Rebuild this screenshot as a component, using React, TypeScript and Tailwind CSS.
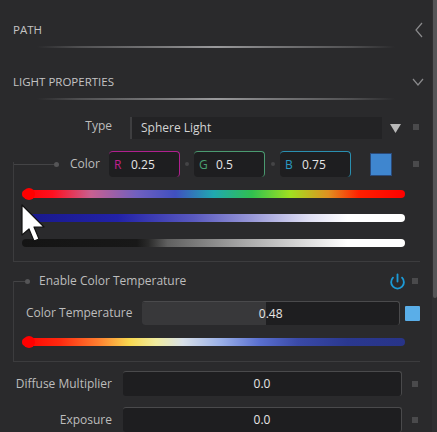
import React from 'react';
import { Power } from 'lucide-react';

const font = { fontFamily: '"Open Sans", "Noto Sans", sans-serif' };

const Square = () => <div className="w-[6px] h-[6px] bg-[#4a4a4c] shrink-0" />;

const Glow = () => (
    <div className="mx-[37px] w-[358px] flex flex-col items-center">
        <div className="w-full h-[2px] bg-[linear-gradient(90deg,transparent,#505052_12%,#7a7a7c_35%,#9a9a9c_50%,#7a7a7c_65%,#505052_88%,transparent)]" />
    </div>
);

const Chan = ({ letter, value, color, border }: { letter: string; value: string; color: string; border: string }) => (
    <div className={`w-[71px] h-[26px] rounded-[4px] bg-[#1e1e20] border-t border-r ${border} flex items-center`}>
        <span className={`w-[22px] pl-[5px] text-[12px] ${color}`}>{letter}</span>
        <span className="text-[12px] text-[#e6e6e6]">{value}</span>
    </div>
);

const Cursor = () => (
    <svg width="28" height="40" viewBox="0 0 28 40" className="absolute left-[21px] top-[204px] pointer-events-none">
        <path d="M1 1 L1 31 L8 25 L13 37 L18 35 L13 23 L23 23 Z" fill="#fff" stroke="#111" strokeWidth="1.2" strokeLinejoin="round" />
    </svg>
);

export default function App() {
    return (
        <div className="w-[437px] h-[432px] overflow-hidden bg-[#2a2a2c] flex relative text-[#bdbdbd]" style={font}>
            <div className="w-[432px] flex flex-col">
                <div className="pt-[20px]" />
                <div className="h-[22px] flex items-center justify-between pl-[13px] pr-[8px]">
                    <span className="text-[11.5px] text-[#c4c4c4]">PATH</span>
                    <svg width="10" height="16" viewBox="0 0 10 16"><path d="M8 1 L2 8 L8 15" fill="none" stroke="#8a8a8c" strokeWidth="1.2" /></svg>
                </div>
                <div className="mt-[6px]"><Glow /></div>
                <div className="mt-[24px] h-[22px] flex items-center justify-between pl-[13px] pr-[8px]">
                    <span className="text-[11.5px] text-[#c4c4c4]">LIGHT PROPERTIES</span>
                    <svg width="12" height="10" viewBox="0 0 12 10"><path d="M1 2 L6 8 L11 2" fill="none" stroke="#8a8a8c" strokeWidth="1.2" /></svg>
                </div>
                <div className="mt-[6px]"><Glow /></div>

                {/* Type */}
                <div className="mt-[17px] h-[22px] flex items-center">
                    <span className="w-[112px] text-right text-[12px] -mt-[4px]">Type</span>
                    <div className="ml-[18px] w-[252px] h-[22px] bg-[#232325] border-l-2 border-[#3e3e40] flex items-center pl-[9px] text-[12px] text-[#d4d4d4]">
                        Sphere Light
                    </div>
                    <svg width="11" height="9" viewBox="0 0 11 9" className="ml-[8px]"><path d="M0 0 L11 0 L5.5 9 Z" fill="#b8b8b8" /></svg>
                    <div className="ml-[12px] -mt-[2px]"><Square /></div>
                </div>

                {/* Color group */}
                <div className="mt-[12px] ml-[13px] w-[407px] border-b border-[#3c3c3e] relative pb-[14px]">
                    <div className="absolute left-0 top-[11px] bottom-0 w-px bg-[#3c3c3e]" />
                    <div className="h-[26px] flex items-center">
                        <div className="w-[41px] h-px bg-[#444446]" />
                        <div className="w-[5px] h-[5px] rounded-full bg-[#555557]" />
                        <div className="w-[11px]" />
                        <span className="w-[39px] text-[12px]">Color</span>
                        <Chan letter="R" value="0.25" color="text-[#c0208f]" border="border-[#b0208f]" />
                        <div className="w-[14px] flex justify-center"><div className="w-[4px] h-[4px] rounded-full bg-[#444446]" /></div>
                        <Chan letter="G" value="0.5" color="text-[#4aa070]" border="border-[#4a9a70]" />
                        <div className="w-[15px] flex justify-center"><div className="w-[4px] h-[4px] rounded-full bg-[#444446]" /></div>
                        <Chan letter="B" value="0.75" color="text-[#2a9ac0]" border="border-[#2a8fb0]" />
                        <div className="w-[19px]" />
                        <div className="w-[22px] h-[23px] bg-[#3f86cf] border border-[#2a4a7a]" />
                        <div className="ml-[21px]"><Square /></div>
                    </div>
                    <div className="pl-[9px] mt-[13px] relative">
                        <div className="w-[383px] h-[8px] rounded-full bg-[linear-gradient(90deg,#ff0000_0%,#ff1020_8%,#c86090_18%,#7060c0_30%,#4050c0_40%,#20a8b0_50%,#30c050_60%,#a0e020_70%,#e09020_80%,#ff2000_88%,#ff0000_100%)]" />
                        <div className="absolute left-[10px] top-[-2px] w-[12px] h-[12px] rounded-full bg-[#ff0000]" />
                    </div>
                    <div className="pl-[9px] mt-[16px]">
                        <div className="w-[383px] h-[8px] rounded-full bg-[linear-gradient(90deg,#18188a_0%,#2222a8_25%,#5a5ac0_45%,#9898d8_60%,#e0e0f4_75%,#ffffff_85%)]" />
                    </div>
                    <div className="pl-[9px] mt-[17px]">
                        <div className="w-[383px] h-[8px] rounded-full bg-[linear-gradient(90deg,#141414_0%,#181818_30%,#2a2a2a_33%,#606060_38%,#a8a8a8_58%,#ffffff_85%)]" />
                    </div>
                </div>

                {/* Color temperature group */}
                <div className="mt-[10px] ml-[13px] w-[407px] border-b border-[#3c3c3e] relative pb-[15px]">
                    <div className="absolute left-0 top-[9px] bottom-0 w-px bg-[#3c3c3e]" />
                    <div className="h-[18px] flex items-center">
                        <div className="w-[12px] h-px bg-[#444446]" />
                        <div className="w-[5px] h-[5px] rounded-full bg-[#555557]" />
                        <span className="ml-[9px] text-[12px]">Enable Color Temperature</span>
                        <div className="flex-1" />
                        <Power size={17} strokeWidth={2.6} color="#1c9ad6" />
                        <div className="ml-[6px] mr-[2px]"><Square /></div>
                    </div>
                    <div className="mt-[11px] h-[24px] flex items-center">
                        <span className="pl-[13px] w-[130px] text-[12px]">Color Temperature</span>
                        <div className="w-[259px] h-[24px] rounded-[3px] bg-[#1e1e20] border-t border-r border-[#4a4a4c] flex relative overflow-hidden">
                            <div className="w-[124px] h-full bg-[#38383a]" />
                            <span className="absolute inset-0 flex items-center justify-center text-[12px] text-[#e6e6e6]">0.48</span>
                        </div>
                        <div className="ml-[5px] w-[15px] h-[15px] bg-[#5aaee8] rounded-[1px]" />
                    </div>
                    <div className="pl-[9px] mt-[13px] relative">
                        <div className="w-[383px] h-[8px] rounded-full bg-[linear-gradient(90deg,#ff0000_0%,#ff2a10_10%,#ff8030_20%,#f8d850_28%,#f0eca0_35%,#d8e0e8_42%,#9ab0e8_52%,#5a70d0_62%,#3a4aa8_72%,#2a3890_85%,#283488_100%)]" />
                        <div className="absolute left-[10px] top-[-2px] w-[12px] h-[12px] rounded-full bg-[#ff0000]" />
                    </div>
                </div>

                {/* Diffuse / Exposure */}
                <div className="mt-[9px] h-[25px] flex items-center">
                    <span className="w-[112px] text-right text-[12px]">Diffuse Multiplier</span>
                    <div className="ml-[11px] w-[279px] h-[25px] rounded-[3px] bg-[#1e1e20] border-t border-r border-[#4a4a4c] flex items-center justify-center text-[12px] text-[#e6e6e6]">0.0</div>
                    <div className="ml-[10px]"><Square /></div>
                </div>
                <div className="mt-[11px] h-[25px] flex items-center">
                    <span className="w-[112px] text-right text-[12px]">Exposure</span>
                    <div className="ml-[11px] w-[279px] h-[25px] rounded-[3px] bg-[#1e1e20] border-t border-r border-[#4a4a4c] flex items-center justify-center text-[12px] text-[#e6e6e6]">0.0</div>
                    <div className="ml-[10px]"><Square /></div>
                </div>
            </div>

            {/* scrollbar */}
            <div className="w-[5px] h-full bg-[#2f2f31] flex flex-col">
                <div className="ml-[1px] w-[4px] h-[298px] rounded-b-[2px] bg-[#555557]" />
            </div>

            <Cursor />
        </div>
    );
}
